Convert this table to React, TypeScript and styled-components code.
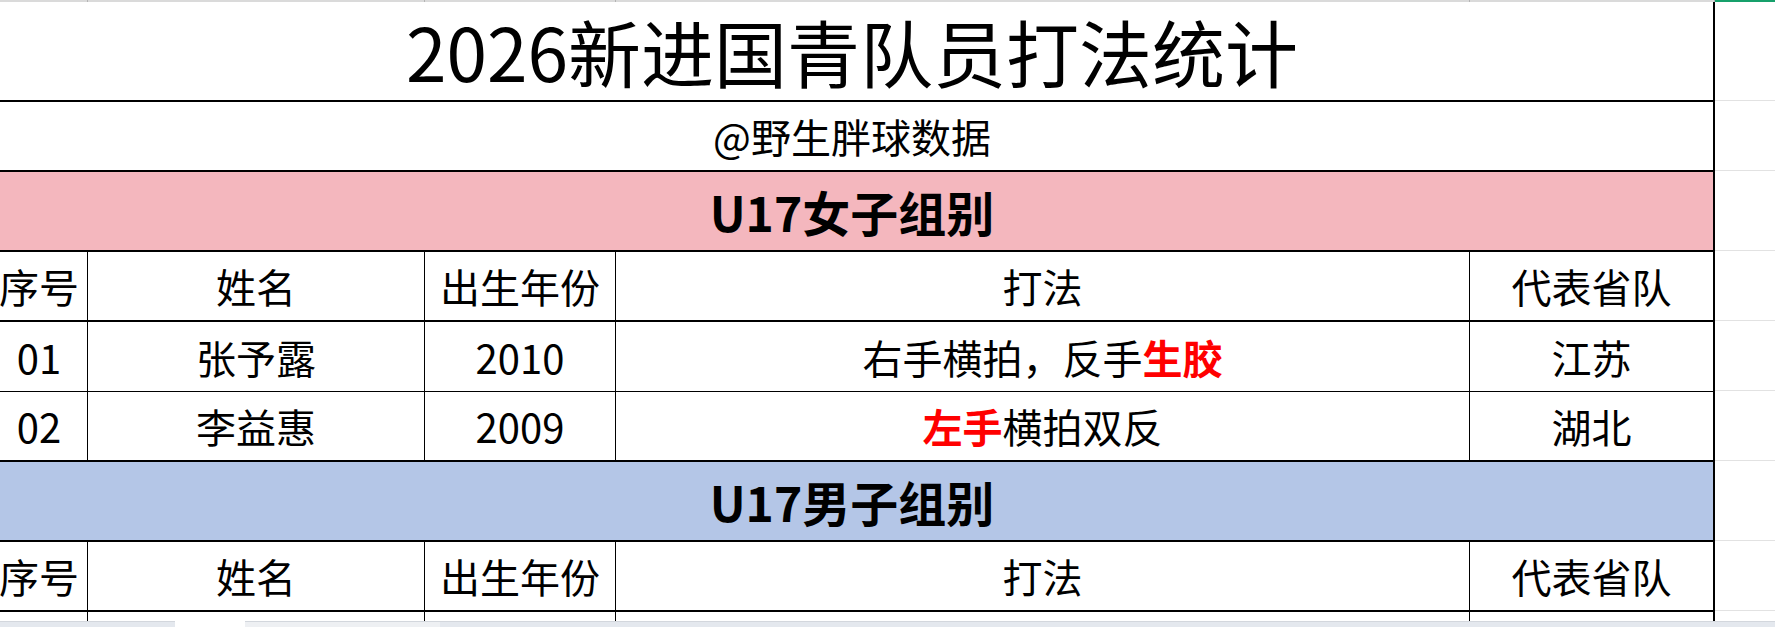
import React from "react";
import styled, {createGlobalStyle} from "styled-components";

const GlobalStyle = createGlobalStyle`
  html, body {
    margin: 0;
    padding: 0;
    background: #fff;
    overflow: hidden;
  }
  body {
    font-family: "Noto Sans CJK SC", "Microsoft YaHei", sans-serif;
    color: #000;
  }
`

// column widths of the sheet, the first column starts a little off screen
const COLS = [97, 337, 191, 854, 245];
const TABLE_W = COLS.reduce((a, b) => a + b, 0);

const HEADERS = ["序号", "姓名", "出生年份", "打法", "代表省队"];

type Player = {
    no: string;
    name: string;
    year: string;
    style: React.ReactNode;
    team: string;
};

export default function App() {
    const girls: Player[] = [
        {no: "01", name: "张予露", year: "2010", style: <>右手横拍，反手<Red>生胶</Red></>, team: "江苏"},
        {no: "02", name: "李益惠", year: "2009", style: <><Red>左手</Red>横拍双反</>, team: "湖北"},
    ];

    return (
        <>
            <GlobalStyle/>
            <Page>
                <Sheet>
                    <TopStrip>
                        {COLS.map((w, i) => <HeadTick key={i} $w={w}/>)}
                        <Selected/>
                    </TopStrip>

                    <Row $h={100}>
                        <Cell $w={TABLE_W} $last $bottom={2}>
                            <Title>2026新进国青队员打法统计</Title>
                        </Cell>
                        <Filler/>
                    </Row>

                    <Row $h={70}>
                        <Cell $w={TABLE_W} $last $bottom={2}>@野生胖球数据</Cell>
                        <Filler/>
                    </Row>

                    <Row $h={80}>
                        <Band $w={TABLE_W} $last $bottom={2} $bg="#f4b7be">U17女子组别</Band>
                        <Filler/>
                    </Row>

                    <HeaderRow/>

                    {girls.map((p, i) => {
                        const line = i === girls.length - 1 ? 2 : 1;
                        return (
                            <Row $h={70} key={p.no}>
                                <Cell $w={COLS[0]} $bottom={line}>{p.no}</Cell>
                                <Cell $w={COLS[1]} $bottom={line}>{p.name}</Cell>
                                <Cell $w={COLS[2]} $bottom={line}>{p.year}</Cell>
                                <Cell $w={COLS[3]} $bottom={line}>{p.style}</Cell>
                                <Cell $w={COLS[4]} $last $bottom={line}>{p.team}</Cell>
                                <Filler/>
                            </Row>
                        );
                    })}

                    <Row $h={80}>
                        <Band $w={TABLE_W} $last $bottom={2} $bg="#b4c6e7">U17男子组别</Band>
                        <Filler/>
                    </Row>

                    <HeaderRow/>

                    <LastRow>
                        {COLS.map((w, i) => <Cell key={i} $w={w} $last={i === COLS.length - 1}/>)}
                        <Filler $plain/>
                    </LastRow>
                </Sheet>

                <TabBar>
                    <Tab $w={175}/>
                    <Gap/>
                    <Tab $w={195} $light/>
                    <Tab/>
                </TabBar>
            </Page>
        </>
    );
}

const HeaderRow = () => (
    <Row $h={70}>
        {HEADERS.map((h, i) => (
            <Cell key={h} $w={COLS[i]} $last={i === HEADERS.length - 1} $bottom={2}>{h}</Cell>
        ))}
        <Filler/>
    </Row>
)

const Page = styled.div`
  width: 1775px;
  height: 627px;
  display: flex;
  flex-direction: column;
  overflow: hidden;
`

const Sheet = styled.div`
  flex: 1;
  display: flex;
  flex-direction: column;
  margin-left: -9px;
  min-height: 0;
`

const TopStrip = styled.div`
  display: flex;
  height: 2px;
  flex-shrink: 0;
`

const HeadTick = styled.div<{ $w: number }>`
  flex: 0 0 ${p => p.$w}px;
  box-sizing: border-box;
  background: #dadada;
  border-right: 1px solid #b4b4b4;
`

const Selected = styled.div`
  flex: 1;
  background: #16a06b;
`

const Row = styled.div<{ $h: number }>`
  display: flex;
  height: ${p => p.$h}px;
  flex-shrink: 0;
`

const LastRow = styled.div`
  display: flex;
  flex: 1;
  min-height: 0;
`

const Cell = styled.div<{ $w: number; $last?: boolean; $bottom?: number }>`
  flex: 0 0 ${p => p.$w}px;
  box-sizing: border-box;
  display: flex;
  align-items: center;
  justify-content: center;
  border-right: ${p => (p.$last ? 2 : 1)}px solid #000;
  border-bottom: ${p => p.$bottom ?? 0}px solid #000;
  font-size: 40px;
  line-height: 1.2;
  white-space: nowrap;
`

const Title = styled.span`
  font-size: 73px;
  line-height: 1.2;
`

const Band = styled(Cell)<{ $bg: string }>`
  background: ${p => p.$bg};
  font-size: 48px;
  font-weight: 700;
  padding-top: 2px;
`

const Red = styled.span`
  color: #ff0000;
  font-weight: 700;
`

const Filler = styled.div<{ $plain?: boolean }>`
  flex: 1;
  box-sizing: border-box;
  border-bottom: ${p => (p.$plain ? "none" : "1px solid #e2e2e2")};
  margin-bottom: ${p => (p.$plain ? 0 : 1)}px;
`

const TabBar = styled.div`
  display: flex;
  height: 6px;
  flex-shrink: 0;
`

const Tab = styled.div<{ $w?: number; $light?: boolean }>`
  ${p => (p.$w ? `flex: 0 0 ${p.$w}px;` : "flex: 1;")}
  box-sizing: border-box;
  background: ${p => (p.$light ? "#eef0f3" : "#e4e8ee")};
  border-top: 1px solid #d3d7dd;
`

const Gap = styled.div`
  flex: 0 0 70px;
`
